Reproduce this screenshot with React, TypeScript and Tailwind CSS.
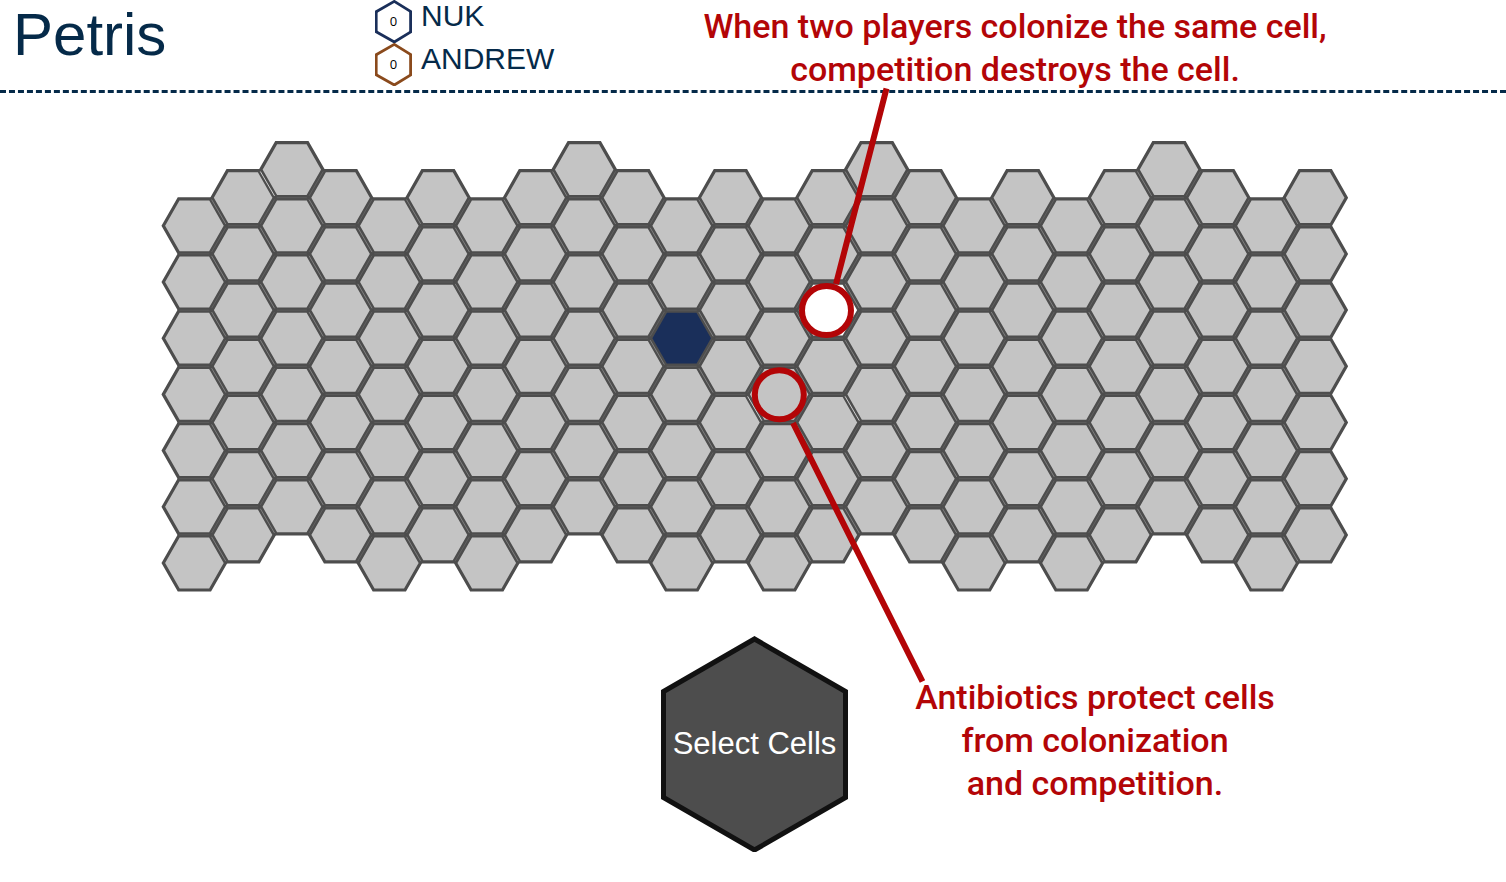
const COLUMN_COUNT = 24;
const ROW_COUNT = 7;
const COLUMN_PITCH = 48.73;
const ROW_PITCH = 56.2;
const FIRST_X = 35.4;
const FIRST_Y = 76.6;

// Half rows by which each column starts below the highest one, repeated every six columns.
const COLUMN_STARTS = [2, 1, 0, 1, 2, 1];

type CellState = 'empty' | 'owned' | 'destroyed';

interface Cell {
  id: string;
  column: number;
  level: number;
  x: number;
  y: number;
  state: CellState;
}

const CELL_FILL: Record<CellState, string> = {
  empty: '#c4c4c4',
  owned: '#1a2f5a',
  destroyed: '#ffffff',
};

// Cells whose upper right seam is open.
const OPEN_SEAMS = ['1-0', '11-4', '13-4'];

function stateOf(column: number, row: number): CellState {
  if (column === 10 && row === 2) return 'owned';
  if (column === 13 && row === 2) return 'destroyed';
  return 'empty';
}

const cells: Cell[] = [];
for (let column = 0; column < COLUMN_COUNT; column++) {
  for (let row = 0; row < ROW_COUNT; row++) {
    const level = COLUMN_STARTS[column % 6] + row * 2;
    cells.push({
      id: `${column}-${row}`,
      column,
      level,
      x: FIRST_X + column * COLUMN_PITCH,
      y: FIRST_Y + (level * ROW_PITCH) / 2,
      state: stateOf(column, row),
    });
  }
}

const occupied = new Set(cells.map((cell) => `${cell.column}:${cell.level}`));

function hasCell(column: number, level: number) {
  return occupied.has(`${column}:${level}`);
}

const players = [
  { name: 'NUK', score: 0, color: '#1a2f5a' },
  { name: 'ANDREW', score: 0, color: '#8a4a1c' },
];

function ScoreBadge({ score, color }: { score: number; color: string }) {
  return (
    <span className="relative flex h-[43px] w-[37px] shrink-0 items-center justify-center">
      <svg className="absolute inset-0" width="37" height="43" viewBox="0 0 37 43" fill="none" aria-hidden="true">
        <path d="M0.3 12.3 19.3 1.4 37 12.3M0.3 31.2 19.3 42 37 31.2" stroke={color} strokeWidth="2.8" />
        <path d="M1.2 12V32M35.6 12V32" stroke={color} strokeWidth="2.8" />
      </svg>
      <span className="relative font-['Open_Sans',sans-serif] text-[13px] leading-none text-black">{score}</span>
    </span>
  );
}

function HexCell({ cell }: { cell: Cell }) {
  return (
    <path
      transform={`translate(${cell.x} ${cell.y})`}
      d="M-31.1 0-15.7-27H15.7L31.1 0 15.7 27H-15.7Z"
      fill={CELL_FILL[cell.state]}
      stroke="#4d4d4d"
      strokeWidth="3.2"
    />
  );
}

function Seams({ cell }: { cell: Cell }) {
  const { column, level } = cell;
  return (
    <g transform={`translate(${cell.x} ${cell.y})`} strokeWidth="0.8">
      {hasCell(column + 1, level - 1) && (
        <path d="M17.2-26.2 31.4-1.8" stroke={OPEN_SEAMS.includes(cell.id) ? '#f0f0f0' : '#8c8c8c'} />
      )}
      {hasCell(column + 1, level + 1) && <path d="M31.4 1.8 17.2 26.2" stroke="#666666" />}
      {hasCell(column, level + 2) && <path d="M-15 28.1H15" stroke="#606060" />}
    </g>
  );
}

function Board() {
  const inactive = cells.filter((cell) => cell.state === 'empty');
  const active = cells.filter((cell) => cell.state !== 'empty');
  return (
    <svg className="block overflow-visible" width="1191" height="543" viewBox="0 0 1191 543" role="img" aria-label="Game board">
      {[...inactive, ...active].map((cell) => (
        <HexCell key={cell.id} cell={cell} />
      ))}
      {cells.map((cell) => (
        <Seams key={cell.id} cell={cell} />
      ))}
      <g fill="none" stroke="#b30507" strokeWidth="6">
        <circle cx="667.5" cy="217.5" r="24.5" />
        <circle cx="620.3" cy="301.7" r="24.5" />
        <path d="M727.5-4.5 677 191M634 330 763.5 588.5" />
      </g>
    </svg>
  );
}

export default function App() {
  return (
    <div className="min-h-screen overflow-x-hidden bg-white font-['Liberation_Sans',Arial,sans-serif] text-[#052a49]">
      <header className="flex h-[93px] items-start border-b-[3px] border-dashed border-[#052a49] pl-[13px]">
        <h1 className="w-[362px] text-[60px] leading-[70px]">Petris</h1>
        <ul>
          {players.map((player) => (
            <li key={player.name} className="flex h-[43px] gap-[9px]">
              <ScoreBadge score={player.score} color={player.color} />
              <span className="text-[30px] leading-8">{player.name}</span>
            </li>
          ))}
        </ul>
      </header>

      <main className="flex flex-col items-center pl-[3px]">
        <div className="relative font-[Roboto,sans-serif] text-[34px] font-medium leading-[43px] text-[#b30507]">
          <Board />
          <p className="absolute -top-[88px] left-[516px] w-[680px] text-center">
            When two players colonize the same cell,
            <br />
            competition destroys the cell.
          </p>
          <p className="absolute left-[736px] top-[583px] w-[400px] text-center">
            Antibiotics protect cells
            <br />
            from colonization
            <br />
            and competition.
          </p>
        </div>

        <button type="button" className="relative flex h-[216px] w-[188px] cursor-pointer items-center justify-center">
          <svg className="absolute inset-0" width="188" height="216" viewBox="0 0 188 216" aria-hidden="true">
            <path d="M93.5 3 184.5 55.5V161.5L93.5 214 2.5 161.5V55.5Z" fill="#4d4d4d" stroke="#111111" strokeWidth="5" />
          </svg>
          <span className="relative whitespace-nowrap text-[31px] leading-9 text-white">Select Cells</span>
        </button>
      </main>
    </div>
  );
}
